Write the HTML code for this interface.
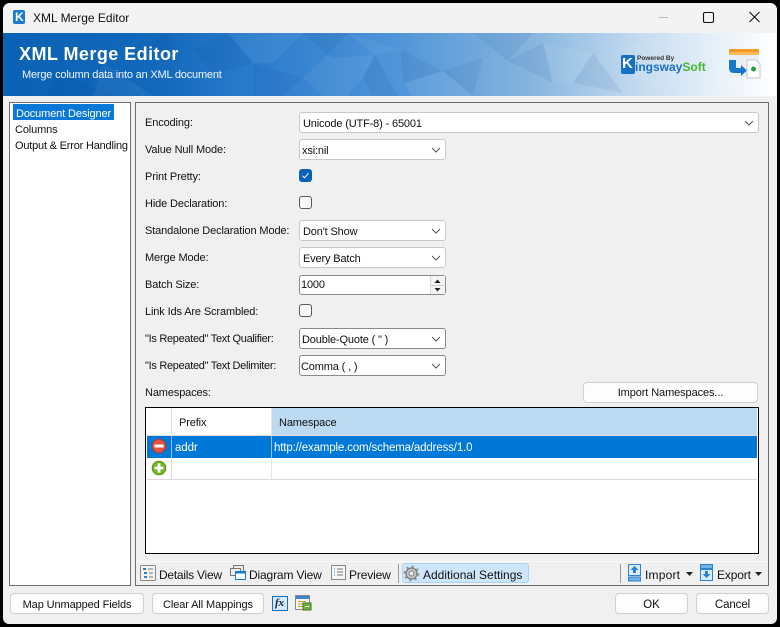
<!DOCTYPE html>
<html><head><meta charset="utf-8">
<style>
html,body{margin:0;padding:0;background:#000;}
#w{position:relative;width:780px;height:627px;overflow:hidden;background:#000;font-family:"Liberation Sans",sans-serif;font-size:11px;color:#111;}
#win{position:absolute;left:3px;top:3px;width:774px;height:621px;background:#f0f0f0;border-radius:7px 7px 6px 6px;overflow:hidden;}
.t{position:absolute;white-space:nowrap;line-height:14px;letter-spacing:-.13px;}
.tb{font-size:12px;letter-spacing:-.15px;}
.b{position:absolute;box-sizing:border-box;}
.btn{position:absolute;box-sizing:border-box;background:#fdfdfd;border:1px solid #d0d0d0;border-radius:4px;text-align:center;white-space:nowrap;font-size:11px;letter-spacing:-.1px;}
.dd{position:absolute;box-sizing:border-box;left:299px;width:147px;height:21px;background:#fff;border:1px solid #c8c8c8;border-radius:3px;line-height:23px;padding-left:3px;white-space:nowrap;letter-spacing:-.15px;}
.dk{border-color:#8a8a8a;}
.cv{position:absolute;right:3px;top:6px;width:12px;height:8px;}
.cb{position:absolute;box-sizing:border-box;left:299px;width:13px;height:13px;border:1px solid #5a5a5a;border-radius:3px;background:#f8f8f8;}
</style></head><body>
<div id="w">
<div id="win"></div>

<!-- title bar -->
<div class="b" style="left:3px;top:3px;width:774px;height:30px;background:#f3f3f3;border-radius:7px 7px 0 0;"></div>
<div class="b" style="left:13px;top:10px;width:12px;height:14px;background:#1a7bd0;border-radius:2px;"></div>
<div class="t" style="left:15px;top:10px;color:#fff;font-weight:bold;font-size:12px;">K</div>
<div class="t" style="left:33px;top:11px;font-size:12px;letter-spacing:0;">XML Merge Editor</div>
<svg class="b" style="left:655px;top:10px;" width="110" height="16"><path d="M3 7.500H13" stroke="#bdbdbd" stroke-width="1"/><rect x="48.500" y="2.500" width="10" height="10" rx="1.500" fill="none" stroke="#111" stroke-width="1.100"/><path d="M94.500 2L104.500 12M104.500 2L94.500 12" stroke="#111" stroke-width="1.100"/></svg>

<!-- banner -->
<svg class="b" style="left:3px;top:33px;" width="773" height="63">
<defs><linearGradient id="g" x1="0" x2="1" y1="0" y2="0"><stop offset="0" stop-color="#0a62b4"/><stop offset=".2" stop-color="#1268bb"/><stop offset=".32" stop-color="#2a7bcc"/><stop offset=".5" stop-color="#4d93d8"/><stop offset=".68" stop-color="#85b4de"/><stop offset=".82" stop-color="#c2daef"/><stop offset=".92" stop-color="#e6f0f9"/><stop offset="1" stop-color="#ffffff"/></linearGradient></defs>
<rect width="773" height="63" fill="url(#g)"/>
<g fill="#003a80" opacity=".07">
<polygon points="190,16 225,0 250,30 210,42"/><polygon points="300,0 345,0 325,22"/><polygon points="360,45 372,22 395,63 370,63"/>
<polygon points="130,20 165,0 175,30"/><polygon points="398,17 440,38 400,50"/><polygon points="250,30 300,45 280,63 250,63"/>
<polygon points="60,40 110,63 40,63"/><polygon points="590,20 620,60 570,50"/><polygon points="470,0 530,0 505,28"/><polygon points="505,28 540,10 550,50"/>
<polygon points="440,38 480,25 470,63"/>
</g>
<g fill="#ffffff" opacity=".05">
<polygon points="330,25 372,22 360,45 345,63 320,63"/><polygon points="400,50 440,38 470,63 410,63"/><polygon points="540,10 590,20 570,50 550,50"/>
<polygon points="225,0 300,0 270,30 250,30"/><polygon points="620,15 680,0 670,50 640,63"/><polygon points="100,30 150,63 90,63"/><polygon points="700,20 760,40 720,63"/><polygon points="345,0 398,17 372,22"/><polygon points="300,45 325,22 330,25 320,63"/>
</g>
</svg>
<div class="t" style="left:19px;top:44px;color:#fff;font-size:18px;line-height:21px;font-weight:bold;letter-spacing:.45px;">XML Merge Editor</div>
<div class="t" style="left:22px;top:68px;color:#f2f7fc;font-size:11px;letter-spacing:-.19px;">Merge column data into an XML document</div>

<!-- logo -->
<div class="b" style="left:621px;top:55px;width:14px;height:19px;background:#1471c4;border-radius:2px;"></div>
<div class="t" style="left:622px;top:57px;color:#fff;font-weight:bold;font-size:15px;">K</div>
<div class="t" style="left:637px;top:54px;color:#333;font-weight:bold;font-size:6.500px;line-height:9px;letter-spacing:0;">Powered By</div>
<div class="t" style="left:635px;top:60px;color:#1c6fc0;font-weight:bold;font-size:12px;letter-spacing:0;">ingsway<span style="color:#46b82f;">Soft</span></div>
<svg class="b" style="left:728px;top:48px;" width="34" height="32">
<rect x="1" y="1" width="30" height="28" fill="#e9eef3"/><rect x="1" y="1" width="30" height="3" fill="#f59a1e"/><rect x="1" y="4" width="30" height="3" fill="#f9b85a"/>
<path d="M1 12h7v8h5v-3l6 5.500-6 5.500v-3H6q-5 0-5-5z" fill="#1877c9"/>
<path d="M19 12h9l4 4v14H19z" fill="#fff" stroke="#c8c8c8"/><circle cx="25.500" cy="21" r="2.500" fill="#22a34a"/>
</svg>

<!-- left panel -->
<div class="b" style="left:9px;top:102px;width:122px;height:484px;background:#fff;border:1px solid #6f6f6f;"></div>
<div class="b" style="left:13px;top:104px;width:101px;height:16px;background:#0a78d7;"></div>
<div class="t" style="left:16px;top:107px;color:#fff;">Document Designer</div>
<div class="t" style="left:15px;top:123px;">Columns</div>
<div class="t" style="left:15px;top:139px;letter-spacing:-.2px;">Output &amp; Error Handling</div>

<!-- right panel -->
<div class="b" style="left:135px;top:102px;width:634px;height:484px;border:1px solid #6f6f6f;background:#f0f0f0;"></div>

<div class="t" style="left:145px;top:116px;">Encoding:</div>
<div class="t" style="left:145px;top:143px;">Value Null Mode:</div>
<div class="t" style="left:145px;top:170px;">Print Pretty:</div>
<div class="t" style="left:145px;top:197px;">Hide Declaration:</div>
<div class="t" style="left:145px;top:224px;">Standalone Declaration Mode:</div>
<div class="t" style="left:145px;top:251px;">Merge Mode:</div>
<div class="t" style="left:145px;top:278px;">Batch Size:</div>
<div class="t" style="left:145px;top:305px;">Link Ids Are Scrambled:</div>
<div class="t" style="left:145px;top:332px;letter-spacing:-.3px;">"Is Repeated" Text Qualifier:</div>
<div class="t" style="left:145px;top:359px;letter-spacing:-.3px;">"Is Repeated" Text Delimiter:</div>
<div class="t" style="left:145px;top:386px;">Namespaces:</div>

<div class="dd" style="top:112px;width:460px;padding-left:3px;">Unicode (UTF-8) - 65001<svg class="cv" viewBox="0 0 12 8"><path d="M2 2l4 4 4-4" fill="none" stroke="#555"/></svg></div>
<div class="dd" style="top:139px;padding-left:2px;">xsi:nil<svg class="cv" viewBox="0 0 12 8"><path d="M2 2l4 4 4-4" fill="none" stroke="#555"/></svg></div>
<div class="b" style="left:299px;top:169px;width:13px;height:13px;background:#0a62b8;border-radius:3px;"></div>
<svg class="b" style="left:299px;top:169px;" width="13" height="13"><path d="M3.500 6.800l2 2 4-4.500" fill="none" stroke="#fff" stroke-width="1"/></svg>
<div class="cb" style="top:196px;"></div>
<div class="dd" style="top:220px;">Don't Show<svg class="cv" viewBox="0 0 12 8"><path d="M2 2l4 4 4-4" fill="none" stroke="#555"/></svg></div>
<div class="dd" style="top:247px;">Every Batch<svg class="cv" viewBox="0 0 12 8"><path d="M2 2l4 4 4-4" fill="none" stroke="#555"/></svg></div>
<div class="dd dk" style="top:275px;padding-left:1px;line-height:18px;height:20px;background:#fff;">1000</div>
<div class="b" style="left:430px;top:276px;width:15px;height:18px;background:#f4f4f4;border-left:1px solid #ddd;"></div>
<svg class="b" style="left:431px;top:277px;" width="13" height="17"><path d="M3.500 6l3-3.500 3 3.500zM3.500 11h6l-3 3.500z" fill="#222"/><path d="M0 8.500H13" stroke="#ccc"/></svg>
<div class="cb" style="top:304px;"></div>
<div class="dd dk" style="top:328px;padding-left:2px;">Double-Quote ( " )<svg class="cv" viewBox="0 0 12 8"><path d="M2 2l4 4 4-4" fill="none" stroke="#555"/></svg></div>
<div class="dd dk" style="top:355px;padding-left:1px;">Comma ( , )<svg class="cv" viewBox="0 0 12 8"><path d="M2 2l4 4 4-4" fill="none" stroke="#555"/></svg></div>

<div class="btn" style="left:583px;top:382px;width:175px;height:21px;line-height:21px;">Import Namespaces...</div>

<!-- grid -->
<div class="b" style="left:145px;top:407px;width:614px;height:147px;background:#fff;border:1px solid #000;"></div>
<div class="b" style="left:272px;top:408px;width:485px;height:27px;background:#bcdaf1;"></div>
<div class="b" style="left:171px;top:408px;width:1px;height:71px;background:#dcdcdc;"></div>
<div class="b" style="left:271px;top:408px;width:1px;height:71px;background:#e4e4e4;"></div>
<div class="b" style="left:147px;top:435px;width:610px;height:1px;background:#dcdcdc;"></div>
<div class="b" style="left:147px;top:436px;width:610px;height:22px;background:#0078d7;"></div>
<div class="b" style="left:171px;top:436px;width:1px;height:22px;background:#8fc2ea;"></div>
<div class="b" style="left:271px;top:436px;width:1px;height:22px;background:#8fc2ea;"></div>
<div class="b" style="left:147px;top:479px;width:610px;height:1px;background:#dcdcdc;"></div>
<div class="t" style="left:179px;top:416px;">Prefix</div>
<div class="t" style="left:279px;top:416px;">Namespace</div>
<div class="t" style="left:175px;top:441px;color:#fff;font-size:11.500px;letter-spacing:-.1px;">addr</div>
<div class="t" style="left:274px;top:441px;color:#fff;font-size:11.500px;letter-spacing:-.15px;">http://example.com/schema/address/1.0</div>
<svg class="b" style="left:151px;top:438px;" width="16" height="16"><circle cx="8" cy="8" r="6.800" fill="#e2523f" stroke="#b5392c"/><rect x="3.500" y="6.500" width="9" height="3" fill="#fff"/></svg>
<svg class="b" style="left:151px;top:460px;" width="16" height="16"><circle cx="8" cy="8" r="6.800" fill="#71b821" stroke="#4f8f15"/><path d="M3.500 8h9M8 3.500v9" stroke="#fff" stroke-width="2.800"/></svg>

<!-- toolbar -->
<div class="b" style="left:136px;top:561px;width:632px;height:1px;background:#fafafa;"></div>
<svg class="b" style="left:140px;top:565px;" width="16" height="16"><rect x=".5" y=".5" width="15" height="15" rx="1" fill="#f4f4f4" stroke="#888"/><rect x="3" y="3" width="3" height="2" fill="#2d7fc4"/><rect x="4" y="7" width="3" height="2" fill="#2d7fc4"/><rect x="4" y="11" width="3" height="2" fill="#2d7fc4"/><path d="M8 4h5M9 8h4M9 12h4" stroke="#777"/></svg>
<div class="t tb" style="left:159px;top:568px;letter-spacing:-.25px;">Details View</div>
<svg class="b" style="left:230px;top:564px;" width="17" height="17"><rect x="3.500" y="1.500" width="10" height="8" fill="#eee" stroke="#777"/><rect x=".5" y="4.500" width="10" height="7" fill="#eee" stroke="#777"/><rect x="5.500" y="7.500" width="10" height="8" fill="#fff" stroke="#1c7cc8"/><rect x="5.500" y="7.500" width="10" height="2" fill="#1c7cc8"/></svg>
<div class="t tb" style="left:249px;top:568px;">Diagram View</div>
<svg class="b" style="left:331px;top:565px;" width="15" height="15"><rect x=".5" y=".5" width="14" height="14" fill="#f6f6f6" stroke="#888"/><path d="M3 4h1M3 7h1M3 10h1" stroke="#1c7cc8"/><path d="M6 4h6M6 7h6M6 10h6" stroke="#777"/></svg>
<div class="t tb" style="left:349px;top:568px;">Preview</div>
<div class="b" style="left:398px;top:564px;width:1px;height:19px;background:#9a9a9a;"></div>
<div class="b" style="left:402px;top:563px;width:127px;height:20px;background:#cde6fb;border:1px solid #a6d2f5;border-radius:3px;"></div>
<svg class="b" style="left:403px;top:565px;" width="17" height="17"><circle cx="8.500" cy="8.500" r="5.500" fill="#c8c8c8" stroke="#777" stroke-width="1.200"/><circle cx="8.500" cy="8.500" r="2.500" fill="#e6eef5" stroke="#777"/><circle cx="8.500" cy="8.500" r="7" fill="none" stroke="#888" stroke-width="1.800" stroke-dasharray="2 3.500"/></svg>
<div class="t tb" style="left:423px;top:568px;letter-spacing:0;">Additional Settings</div>
<div class="b" style="left:620px;top:564px;width:1px;height:19px;background:#9a9a9a;"></div>
<svg class="b" style="left:628px;top:564px;" width="15" height="18"><rect x=".5" y=".5" width="12" height="11" fill="#d9ecfb" stroke="#2b83cf"/><path d="M6.500 2l4 4H8v3H5V6H2.500z" fill="#2b83cf"/><rect x=".5" y="13" width="12" height="4" fill="#6fb2e6" stroke="#2b83cf"/></svg>
<div class="t tb" style="left:645px;top:568px;letter-spacing:.2px;">Import</div>
<svg class="b" style="left:686px;top:572px;" width="7" height="4"><path d="M0 0h7L3.500 4z" fill="#222"/></svg>
<svg class="b" style="left:700px;top:564px;" width="15" height="18"><rect x=".5" y=".5" width="12" height="4" fill="#6fb2e6" stroke="#2b83cf"/><rect x=".5" y="5.500" width="12" height="11" fill="#d9ecfb" stroke="#2b83cf"/><path d="M5 7h3v3h2.500l-4 4-4-4H5z" fill="#2b83cf"/></svg>
<div class="t tb" style="left:717px;top:568px;">Export</div>
<svg class="b" style="left:755px;top:572px;" width="7" height="4"><path d="M0 0h7L3.500 4z" fill="#222"/></svg>

<!-- bottom -->
<div class="btn" style="left:10px;top:593px;width:134px;height:21px;line-height:23px;">Map Unmapped Fields</div>
<div class="btn" style="left:152px;top:593px;width:112px;height:21px;line-height:23px;">Clear All Mappings</div>
<div class="b" style="left:272px;top:596px;width:16px;height:15px;background:#d4e9fb;border:1px solid #1a6fc0;"></div>
<div class="t" style="left:275px;top:596px;font-family:'Liberation Serif',serif;font-style:italic;font-weight:bold;font-size:11px;color:#123;">fx</div>
<svg class="b" style="left:295px;top:595px;" width="17" height="17"><rect x=".5" y=".5" width="14" height="14" fill="#f5f5f5" stroke="#888"/><rect x="1" y="1" width="13" height="3" fill="#3f86cf"/><path d="M3 6.500h8M3 9h5M3 11.500h5" stroke="#c9a13c"/><rect x="8" y="8" width="8" height="7" fill="#6fae3a" stroke="#3d7d1e"/><path d="M10 11.500h4" stroke="#fff"/></svg>
<div class="btn" style="left:615px;top:593px;width:73px;height:21px;line-height:23px;font-size:11.500px;">OK</div>
<div class="btn" style="left:696px;top:593px;width:73px;height:21px;line-height:23px;font-size:11.500px;">Cancel</div>
</div>
</body></html>
